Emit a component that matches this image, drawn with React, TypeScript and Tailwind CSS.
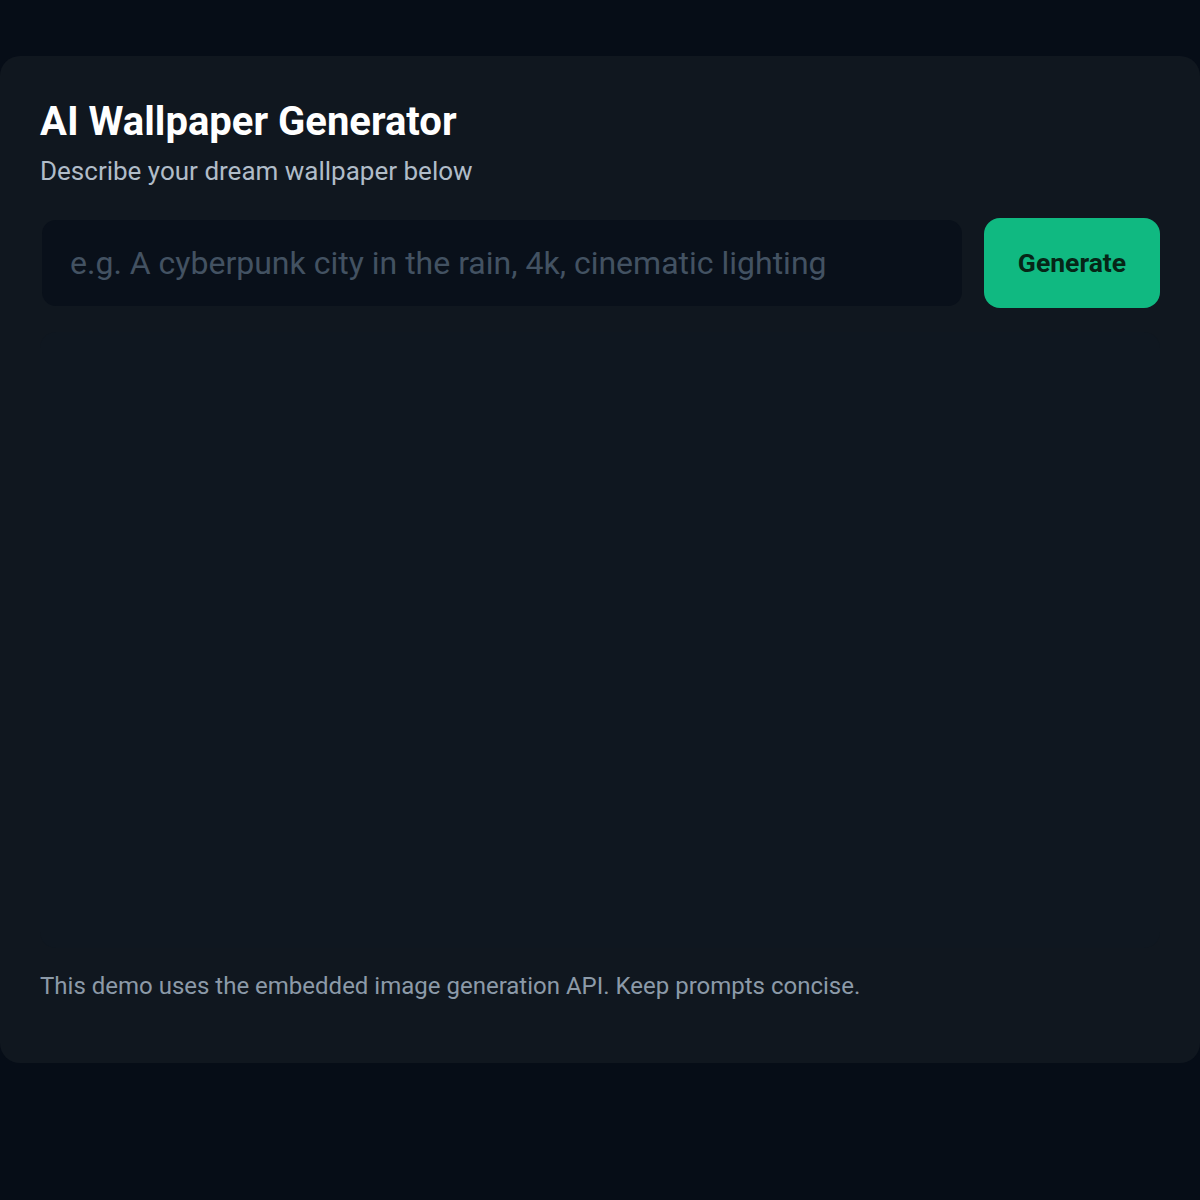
import React from "react";

export default function App() {
  return (
    <div
      className="min-h-[1200px] w-full bg-[#060d17] pt-[56px] pb-[137px]"
      style={{ fontFamily: "Roboto, 'Liberation Sans', sans-serif" }}
    >
      <div className="w-[1200px] h-[1007px] rounded-[20px] bg-[#10171f] px-[40px] pt-[42px] flex flex-col">
        <h1 className="text-[40px] leading-[48px] font-bold text-white">
          AI Wallpaper Generator
        </h1>
        <p className="mt-[8px] text-[26px] leading-[34px] text-[#b0bcc8]">
          Describe your dream wallpaper below
        </p>
        <div className="mt-[30px] flex items-center gap-[22px] pl-[2px]">
          <div className="flex-1 h-[86px] rounded-[14px] bg-[#09101a] flex items-center pl-[28px]">
            <span className="text-[32px] text-[#435262]">
              e.g. A cyberpunk city in the rain, 4k, cinematic lighting
            </span>
          </div>
          <button className="w-[176px] h-[90px] rounded-[16px] bg-[#10b981] text-[26.5px] font-bold text-[#062617]">
            Generate
          </button>
        </div>
        <div className="mt-[24px] h-[616px] rounded-[16px] bg-[#0f1720]" />
        <p className="mt-[22px] text-[24px] leading-[32px] text-[#8c9aa8]">
          This demo uses the embedded image generation API. Keep prompts concise.
        </p>
      </div>
    </div>
  );
}
